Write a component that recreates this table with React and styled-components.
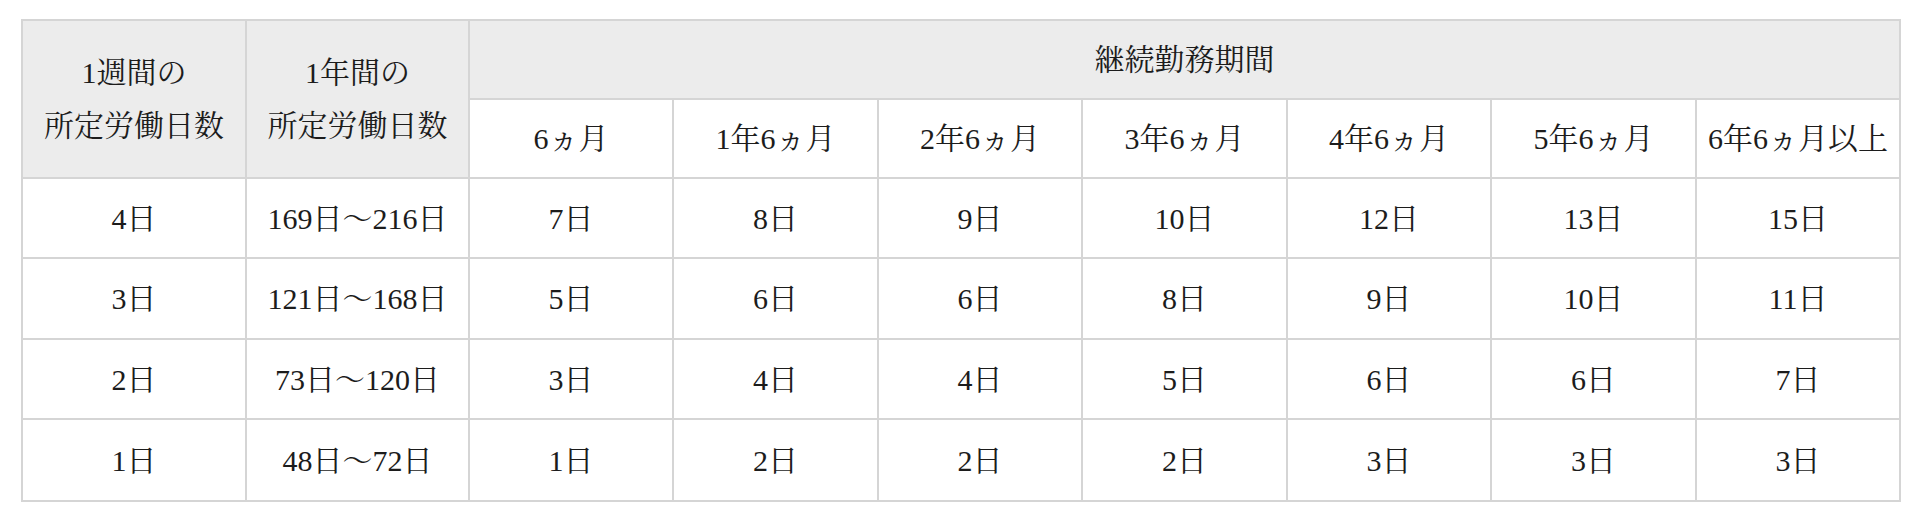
import React from "react";
import styled, { createGlobalStyle } from "styled-components";

const Global = createGlobalStyle`
  html, body { margin: 0; padding: 0; background: #ffffff; }
  body {
    font-family: "Liberation Serif", "Noto Serif CJK JP", "IPAMincho", "IPAexMincho", "Noto Sans CJK JP", serif;
    color: #1c1c1c;
  }
`;

const Page = styled.div`
  padding: 19px 19px 0 21px;
`;

const Table = styled.table`
  width: 1880px;
  border-collapse: collapse;
  table-layout: fixed;
  font-size: 30px;
  line-height: 53px;
`;

const Col = styled.col`
  width: ${(p) => p.$w}px;
`;

const Cell = styled.td`
  border: 2px solid #d5d5d5;
  text-align: center;
  vertical-align: middle;
  padding: 0;
  height: ${(p) => p.$h}px;
  font-weight: normal;
  background: ${(p) => (p.$head ? "#ececec" : "#ffffff")};
  white-space: nowrap;
`;

const HeadCell = styled(Cell).attrs({ as: "th" })``;

const widths = [224, 223, 204, 205, 204, 205, 204, 205, 204];
const periods = ["6ヵ月", "1年6ヵ月", "2年6ヵ月", "3年6ヵ月", "4年6ヵ月", "5年6ヵ月", "6年6ヵ月以上"];
const rows = [
  ["4日", "169日～216日", "7日", "8日", "9日", "10日", "12日", "13日", "15日"],
  ["3日", "121日～168日", "5日", "6日", "6日", "8日", "9日", "10日", "11日"],
  ["2日", "73日～120日", "3日", "4日", "4日", "5日", "6日", "6日", "7日"],
  ["1日", "48日～72日", "1日", "2日", "2日", "2日", "3日", "3日", "3日"],
];
const rowHeights = [78, 79, 78, 80];

export default function App() {
  return (
    <>
      <Global />
      <Page>
        <Table>
          <colgroup>
            {widths.map((w, i) => (
              <Col key={i} $w={w} />
            ))}
          </colgroup>
          <thead>
            <tr>
              <HeadCell $head $h={77} rowSpan={2}>
                1週間の
                <br />
                所定労働日数
              </HeadCell>
              <HeadCell $head $h={77} rowSpan={2}>
                1年間の
                <br />
                所定労働日数
              </HeadCell>
              <HeadCell $head $h={77} colSpan={7}>
                継続勤務期間
              </HeadCell>
            </tr>
            <tr>
              {periods.map((p) => (
                <Cell as="th" $h={77} key={p}>
                  {p}
                </Cell>
              ))}
            </tr>
          </thead>
          <tbody>
            {rows.map((r, i) => (
              <tr key={i}>
                {r.map((c, j) => (
                  <Cell key={j} $h={rowHeights[i]}>
                    {c}
                  </Cell>
                ))}
              </tr>
            ))}
          </tbody>
        </Table>
      </Page>
    </>
  );
}
